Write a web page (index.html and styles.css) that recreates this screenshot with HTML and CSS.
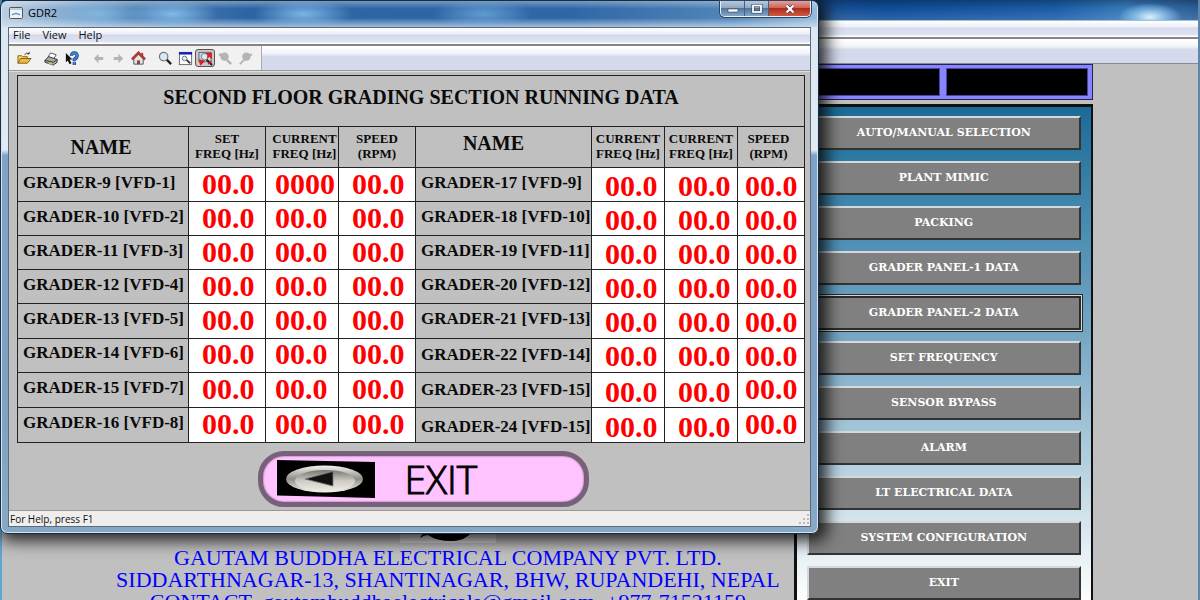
FILE: index.html
```html
<!DOCTYPE html>
<html lang="en">
<head>
<meta charset="utf-8">
<title>GDR2</title>
<link rel="stylesheet" href="styles.css">
</head>
<body>
<div class="main-window">
  <div class="main-title"></div>
  <div class="main-menu"></div>
  <div class="main-tools"></div>
  <main class="main-body">
    <section class="board">
      <svg class="board-logo" viewBox="0 0 96 80"><rect width="96" height="80" rx="2" fill="#dcdcdc"/><path d="M20 75C24 66 34 66 44 69Q60 72 76 63Q68 78 52 78Q36 78 28 72Q24 72 20 75Z" fill="#050505"/></svg>
      <p class="company">GAUTAM BUDDHA ELECTRICAL COMPANY PVT. LTD.<br>SIDDARTHNAGAR-13, SHANTINAGAR, BHW, RUPANDEHI, NEPAL<br>CONTACT- gautambuddhaelectricals@gmail.com, +977-71521159</p>
    </section>
    <aside class="side">
      <div class="displays"><div class="display"></div><div class="display"></div></div>
      <nav class="panel">
        <button class="nav-button">AUTO/MANUAL SELECTION</button>
        <button class="nav-button">PLANT MIMIC</button>
        <button class="nav-button">PACKING</button>
        <button class="nav-button">GRADER PANEL-1 DATA</button>
        <button class="nav-button current">GRADER PANEL-2 DATA</button>
        <button class="nav-button">SET FREQUENCY</button>
        <button class="nav-button">SENSOR BYPASS</button>
        <button class="nav-button">ALARM</button>
        <button class="nav-button">LT ELECTRICAL DATA</button>
        <button class="nav-button">SYSTEM CONFIGURATION</button>
        <button class="nav-button">EXIT</button>
      </nav>
    </aside>
  </main>
</div>

<div class="window">
  <header class="title-bar">
    <svg class="title-icon" width="14" height="12" viewBox="0 0 14 12"><rect x=".5" y=".5" width="13" height="11" rx="1" fill="#eef3f8" stroke="#555"/><path d="M1 2h12" stroke="#9aa"/><path d="M3 8q4-3 8 0" stroke="#5b8fd0" stroke-width="1.5" fill="none"/></svg>
    <span class="title-text">GDR2</span>
    <div class="controls">
      <button class="control" aria-label="Minimize"><svg width="12" height="10" viewBox="0 0 12 10"><rect x="1" y="5" width="10" height="3" fill="#fff" stroke="#456" stroke-width=".7"/></svg></button>
      <button class="control" aria-label="Maximize"><svg width="12" height="10" viewBox="0 0 12 10"><rect x="2" y="1.500" width="8" height="6.500" fill="none" stroke="#345" stroke-width="3"/><rect x="2" y="1.500" width="8" height="6.500" fill="none" stroke="#fff" stroke-width="1.800"/></svg></button>
      <button class="control close" aria-label="Close"><svg width="12" height="10" viewBox="0 0 12 10"><path d="M2.500 1.500l7 7M9.500 1.500l-7 7" stroke="#534" stroke-width="3.500"/><path d="M2.500 1.500l7 7M9.500 1.500l-7 7" stroke="#fff" stroke-width="2.200"/></svg></button>
    </div>
  </header>
  <div class="client">
    <div class="menu-bar">
      <button class="menu">File</button><button class="menu">View</button><button class="menu">Help</button>
    </div>
    <div class="tool-bar">
      <div class="tools">
        <button class="tool" aria-label="Open"><svg viewBox="0 0 16 16"><path d="M1 13V5h4l1 1h5v2" fill="#f4d25a" stroke="#86691a"/><path d="M1 13l3-5h11l-4 5z" fill="#f2b93b" stroke="#7d5c12"/><path d="M8 4q2-3 5-1m0 0V1m0 2h-2" stroke="#333" fill="none"/></svg></button>
        <button class="tool wide" aria-label="Print"><svg viewBox="0 0 16 16"><path d="M4 7l3-5 6 2-3 5z" fill="#fff" stroke="#555"/><path d="M1 10l4-4 9 3v3l-4 3-9-3z" fill="#a9aaa6" stroke="#333"/><path d="M1 10l9 2 4-3" fill="none" stroke="#333"/><path d="M5 13l4 1" stroke="#d6c43c" stroke-width="1.500"/></svg></button>
        <button class="tool" aria-label="Context help"><svg viewBox="0 0 16 16"><path d="M2 2v10l2-2 2 4 2-1-2-4h3z" fill="#111"/><path d="M8 5q0-3 3-3t3 3q0 2-3 4v2M11 12v3" stroke="#173f7d" stroke-width="3.600" fill="none"/><path d="M8 5q0-3 3-3t3 3q0 2-3 4v2M11 12v3" stroke="#3c86dc" stroke-width="2" fill="none"/></svg></button>
        <button class="tool wide" aria-label="Back"><svg viewBox="0 0 16 16"><path d="M3 8l5-5v3.500h5v3H8V13z" fill="#b4b4b4"/></svg></button>
        <button class="tool" aria-label="Forward"><svg viewBox="0 0 16 16"><path d="M13 8L8 3v3.500H3v3h5V13z" fill="#b4b4b4"/></svg></button>
        <button class="tool" aria-label="Home"><svg viewBox="0 0 16 16"><path d="M3 8v6h10V8L8 3z" fill="#e4e4e4" stroke="#555"/><path d="M11 2h2v4h-2z" fill="#a33"/><path d="M1 9l7-7 7 7" fill="none" stroke="#b03a3a" stroke-width="3"/><path d="M6.500 14v-4h3v4z" fill="#743"/></svg></button>
        <button class="tool wide" aria-label="Zoom"><svg viewBox="0 0 16 16"><path d="M9 9l5 5" stroke="#222" stroke-width="2.500"/><circle cx="6" cy="6" r="4.500" fill="#d6ecf4" stroke="#777" stroke-width="1.300"/></svg></button>
        <button class="tool" aria-label="Zoom window"><svg viewBox="0 0 16 16"><rect x="1.500" y="1.500" width="13" height="13" fill="#fff" stroke="#667"/><path d="M1 2.500h14" stroke="#1717c5" stroke-width="2.500"/><path d="M9 9.500l4 3.500" stroke="#333" stroke-width="2"/><circle cx="7" cy="8" r="2.500" fill="#d6ecf4" stroke="#777"/></svg></button>
        <button class="tool pressed" aria-label="Zoom fit"><svg viewBox="0 0 16 16"><rect x="1" y="1.500" width="13" height="10" fill="#c3d9e6" stroke="#667"/><path d="M9 9l6 6" stroke="#222" stroke-width="2.200"/><circle cx="7" cy="6" r="3.500" fill="#d6ecf4" stroke="#777"/><path d="M10 3h4v4zM2 10l4 1-3 3zM10 7l3-3M2 14l4-4M11 14l3-3" fill="#dc1f1f" stroke="#dc1f1f" stroke-width="1.800"/></svg></button>
        <button class="tool" aria-label="Zoom previous"><svg viewBox="0 0 16 16"><path d="M9 9l5 5M1 4h4" stroke="#b4b4b4" stroke-width="2.500"/><circle cx="7" cy="6" r="4.500" fill="#b4b4b4"/></svg></button>
        <button class="tool" aria-label="Zoom next"><svg viewBox="0 0 16 16"><path d="M7 9l-5 5M11 4h4" stroke="#b4b4b4" stroke-width="2"/><circle cx="9" cy="6" r="4.500" fill="#b4b4b4"/></svg></button>
      </div>
      <div class="tool-fill"></div>
    </div>
    <section class="sheet">
      <table class="data">
        <colgroup><col class="c-name"><col class="c-wide"><col class="c-mid"><col class="c-wide"><col class="c-name2"><col class="c-mid"><col class="c-mid"><col class="c-last"></colgroup>
        <thead>
          <tr class="caption-row"><th colspan="8">SECOND FLOOR GRADING SECTION RUNNING DATA</th></tr>
          <tr class="head-row"><th class="name-head">NAME</th><th>SET<br>FREQ [Hz]</th><th class="tight">CURRENT<br>FREQ [Hz]</th><th>SPEED<br>(RPM)</th><th class="name-head raised">NAME</th><th>CURRENT<br>FREQ [Hz]</th><th>CURRENT<br>FREQ [Hz]</th><th class="short">SPEED<br>(RPM)</th></tr>
        </thead>
        <tbody>
          <tr><th>GRADER-9 [VFD-1]</th><td>00.0</td><td class="near">0000</td><td>00.0</td><th>GRADER-17 [VFD-9]</th><td class="low">00.0</td><td class="low">00.0</td><td class="low last">00.0</td></tr>
          <tr><th>GRADER-10 [VFD-2]</th><td>00.0</td><td class="near">00.0</td><td>00.0</td><th>GRADER-18 [VFD-10]</th><td class="low">00.0</td><td class="low">00.0</td><td class="low last">00.0</td></tr>
          <tr><th>GRADER-11 [VFD-3]</th><td>00.0</td><td class="near">00.0</td><td>00.0</td><th>GRADER-19 [VFD-11]</th><td class="low">00.0</td><td class="low">00.0</td><td class="low last">00.0</td></tr>
          <tr><th>GRADER-12 [VFD-4]</th><td>00.0</td><td class="near">00.0</td><td>00.0</td><th>GRADER-20 [VFD-12]</th><td class="low">00.0</td><td class="low">00.0</td><td class="low last">00.0</td></tr>
          <tr><th>GRADER-13 [VFD-5]</th><td>00.0</td><td class="near">00.0</td><td>00.0</td><th>GRADER-21 [VFD-13]</th><td class="low">00.0</td><td class="low">00.0</td><td class="low last">00.0</td></tr>
          <tr><th>GRADER-14 [VFD-6]</th><td>00.0</td><td class="near">00.0</td><td>00.0</td><th class="low">GRADER-22 [VFD-14]</th><td class="low">00.0</td><td class="low">00.0</td><td class="low last">00.0</td></tr>
          <tr><th>GRADER-15 [VFD-7]</th><td>00.0</td><td class="near">00.0</td><td>00.0</td><th class="low">GRADER-23 [VFD-15]</th><td class="lower">00.0</td><td class="lower">00.0</td><td class="last">00.0</td></tr>
          <tr><th>GRADER-16 [VFD-8]</th><td>00.0</td><td class="near">00.0</td><td>00.0</td><th class="lower">GRADER-24 [VFD-15]</th><td class="lower">00.0</td><td class="lower">00.0</td><td class="last">00.0</td></tr>
        </tbody>
      </table>
      <button class="exit">
        <svg class="exit-icon" width="98" height="38" viewBox="0 0 98 38">
          <defs><linearGradient id="rim" x2="0" y2="1"><stop offset="0" stop-color="#f4f3ef"/><stop offset=".5" stop-color="#8f8d88"/><stop offset="1" stop-color="#f7f5f0"/></linearGradient><linearGradient id="face" x2="0" y2="1"><stop offset="0" stop-color="#77746e"/><stop offset=".5" stop-color="#cfccc4"/><stop offset="1" stop-color="#f1eee8"/></linearGradient></defs>
          <path d="M0 0L98 2V38L0 35.500Z" fill="#000"/><ellipse cx="47.500" cy="19" rx="38.500" ry="13.500" fill="url(#rim)"/><ellipse cx="48" cy="21" rx="30" ry="11" fill="url(#face)"/><path d="M28 19L56 11.500V26Z" fill="#111" stroke="#777" stroke-width=".8"/>
        </svg>
        <span>EXIT</span>
      </button>
    </section>
    <footer class="status"><span>For Help, press F1</span>
      <svg width="10" height="10" viewBox="0 0 10 10"><path d="M8 0h2v2H8zM4 4h2v2H4zM8 4h2v2H8zM0 8h2v2H0zM4 8h2v2H4zM8 8h2v2H8z" fill="#bdb9b6"/></svg>
    </footer>
  </div>
</div>
</body>
</html>
```
FILE: styles.css
```css
* { box-sizing: border-box; }
body { margin: 0; height: 100vh; overflow: hidden; background: #c0c0c0; font-family: "Open Sans", "Noto Sans", sans-serif; }
button { font: inherit; color: inherit; padding: 0; margin: 0; border: 0; background: none; }

.main-window { height: 100vh; display: flex; flex-direction: column; overflow: hidden; border-left: 2px solid #5fa6cf; border-right: 2px solid #5f86ad; }
.main-title { height: 21px; flex: none; border-bottom: 1px solid #9fc0dd; background: radial-gradient(ellipse 32px 14px at 96% 85%, #d8f0ff, #9fd0f5aa 50%, transparent), linear-gradient(#0004, #0000 40%, #ffffff22), linear-gradient(90deg, #1a4f93 68%, #0e4c98 74%, #1a5ba6 88%, #3579b9 94%, #2a5c95 100%); }
.main-menu { height: 18px; flex: none; border-bottom: 2px solid #858585; background: linear-gradient(#fff, #eef0f8 35%, #d4daec 45%, #dde3f3 85%, #fff 95%); }
.main-tools { height: 25px; flex: none; border-bottom: 1px solid #8a8a8a; background: linear-gradient(#fff, #f3f4fa 30%, #d4d9ec 45%, #d4d9ec); }
.main-body { flex: 1; min-height: 0; display: flex; padding-right: 8.8%; background: #c0c0c0; }

.board { flex: 1; padding: 399px 0 0 100px; display: flex; flex-direction: column; align-items: center; min-width: 0; }
.board-logo { width: 96px; height: 80px; flex: none; }
.company { margin: 4px 0 0; color: #00f; font: 22px/22px "Liberation Serif", serif; text-align: center; white-space: nowrap; }

.side { width: 299px; flex: none; display: flex; flex-direction: column; gap: 4px; }
.displays { display: flex; gap: 6px; padding: 3px 4px; height: 36px; flex: none; background: #8684ff; border: 1px solid #26224e; }
.display { flex: 1; background: #000; border: 1px solid #4a45aa; }
.panel { display: flex; flex-direction: column; gap: 11px; padding: 9px 10px 20px; border: 2px solid #111; border-top-width: 3px; border-left-width: 3px; background: linear-gradient(#1b6b98, #4288ae 20%, #77a7c5 45%, #b0cddd 68%, #e4eef3 86%, #fff 97%); }
.nav-button { height: 34px; flex: none; background: #808080; color: #fff; border: 2px solid #d5d9dc; border-right-color: #333; border-bottom-color: #333; font: bold 11px/14px "DejaVu Serif", serif; }
.nav-button.current { border: 2px solid #2b2b2b; outline: 1px solid #2b2b2b; outline-offset: 1px; box-shadow: 0 0 0 1px #d5d9dc; }

.window { position: absolute; left: 0; top: 0; width: 68.25%; display: flex; flex-direction: column; padding: 0 7px 6px 7px; border: 1px solid #1c2c3c; border-radius: 7px; box-shadow: inset 0 0 0 1px #d2e6f5, 4px 3px 16px 4px #000c;
  background: linear-gradient(#5d8fc8 0, #dbe7f3 5%, #e1eaf3 26%, #e1eaf3 28%, #7ea3c9 29%, #7fa0c3 70%, #88a8c8); }
.title-bar { display: flex; align-items: center; height: 26px; margin: 0 -6px; padding: 0 6px 2px 7px; border-radius: 6px 6px 0 0;
  background: radial-gradient(ellipse 45px 14px at 12% 50%, #8fc5ecaa, transparent), radial-gradient(ellipse 45px 14px at 21% 50%, #8fc9f4cc, transparent), radial-gradient(ellipse 50px 15px at 37% 50%, #8fc9f4cc, transparent), radial-gradient(ellipse 50px 15px at 59% 50%, #7ab6e4aa, transparent), linear-gradient(#fff5, #fff0 30%, #fff0 65%, #dceaf7aa), linear-gradient(90deg, #b9cfe4, #5686b9 15%, #2c64a3 30%, #2f67a6 70%, #5387b9 90%, #98bbd9); }
.title-text { margin-left: 5px; font-size: 11px; line-height: 14px; color: #000; }
.controls { align-self: flex-start; margin-left: auto; display: flex; border: 1px solid #e7f1fa; border-top: 0; border-radius: 0 0 5px 5px; overflow: hidden; box-shadow: 0 0 0 1px #2d4560; }
.control { width: 24px; height: 15px; display: grid; place-items: center; border-right: 1px solid #44617f; background: linear-gradient(#b5c9dd, #8fa9c4 45%, #54759a 50%, #83a7c8); }
.control.close { width: 41px; border: 0; background: linear-gradient(#e3a198, #cf6558 45%, #b02c1c 50%, #cf5a40); }

.client { display: flex; flex-direction: column; border: 1px solid #5c6b7b; background: #c0c0c0; }
.menu-bar { display: flex; align-items: flex-start; gap: 12px; height: 18px; padding-left: 4px; border-bottom: 2px solid #858585; background: linear-gradient(#fff, #eef0f8 35%, #d4daec 45%, #dde3f3 85%, #fff 95%); }
.menu { font-size: 11px; line-height: 13px; color: #111; }
.tool-bar { display: flex; height: 25px; border-bottom: 1px solid #999; }
.tools { display: flex; align-items: center; padding: 0 6px 0 5px; background: #f1f1f1; border-right: 1px solid #aaa; }
.tool { width: 20px; height: 18px; display: grid; place-items: center; }
.tool.wide { margin-left: 7px; }
.tool svg { width: 15px; height: 15px; }
.tool.pressed { background: #c9c9c9; border: 1px solid #555; border-radius: 3px; }
.tool-fill { flex: 1; background: linear-gradient(#fff, #f3f4fa 30%, #d4d9ec 45%, #d4d9ec); }

.sheet { padding: 3px 7px 3px 10px; border-top: 1px solid #ddd; display: flex; flex-direction: column; align-items: center; gap: 8px; }
.data { width: 100%; height: 368px; table-layout: fixed; border-collapse: collapse; font-family: "Liberation Serif", serif; color: #0a0a0a; }
.c-name { width: 171px; } .c-name2 { width: 176px; } .c-wide { width: 77px; } .c-mid { width: 73px; } .c-last { width: 67px; }
.data th, .data td { padding: 0; border: 1px solid #222; white-space: nowrap; }
.caption-row th { height: 51px; padding: 0 0 9px 20px; font-size: 20px; line-height: 24px; }
.head-row th { height: 41px; font-size: 13px; line-height: 15px; padding-bottom: 2px; }
.head-row .tight { padding-left: 5px; }
.head-row .short { padding-right: 5px; }
.head-row .name-head { font-size: 20px; line-height: 24px; padding: 0 4px 0 0; }
.head-row .name-head.raised { padding: 0 20px 8px 0; }
.data tbody th { padding: 0 0 4px 5px; font-size: 17px; line-height: 20px; text-align: left; }
.data tbody td { padding: 0 0 2px 13px; background: #fff; color: #f00; font-size: 30px; line-height: 30px; font-weight: bold; text-align: left; }
.data tbody td.near { padding-left: 9px; }
.data tbody td.last { padding-left: 7px; }
.data tbody td.low { padding-top: 2px; padding-bottom: 0; }
.data tbody td.lower { padding-top: 4px; padding-bottom: 0; line-height: 29px; }
.data tbody th.low { padding-bottom: 0; }
.data tbody th.lower { padding: 4px 0 0 5px; }
.exit { display: flex; align-items: center; gap: 30px; width: 331px; height: 56px; padding-left: 14px; margin-left: 24px; border: 5px solid #77617a; border-radius: 26px; background: #ffc3ff; box-shadow: inset 0 0 2px #654d66; color: #000; font: 300 39px/44px "Open Sans", sans-serif; -webkit-text-stroke: 1px #000; }
.status { display: flex; justify-content: space-between; align-items: center; height: 16px; padding: 0 1px; background: #f0eded; border-top: 1px solid #999; font-size: 10px; line-height: 14px; color: #111; }
```
